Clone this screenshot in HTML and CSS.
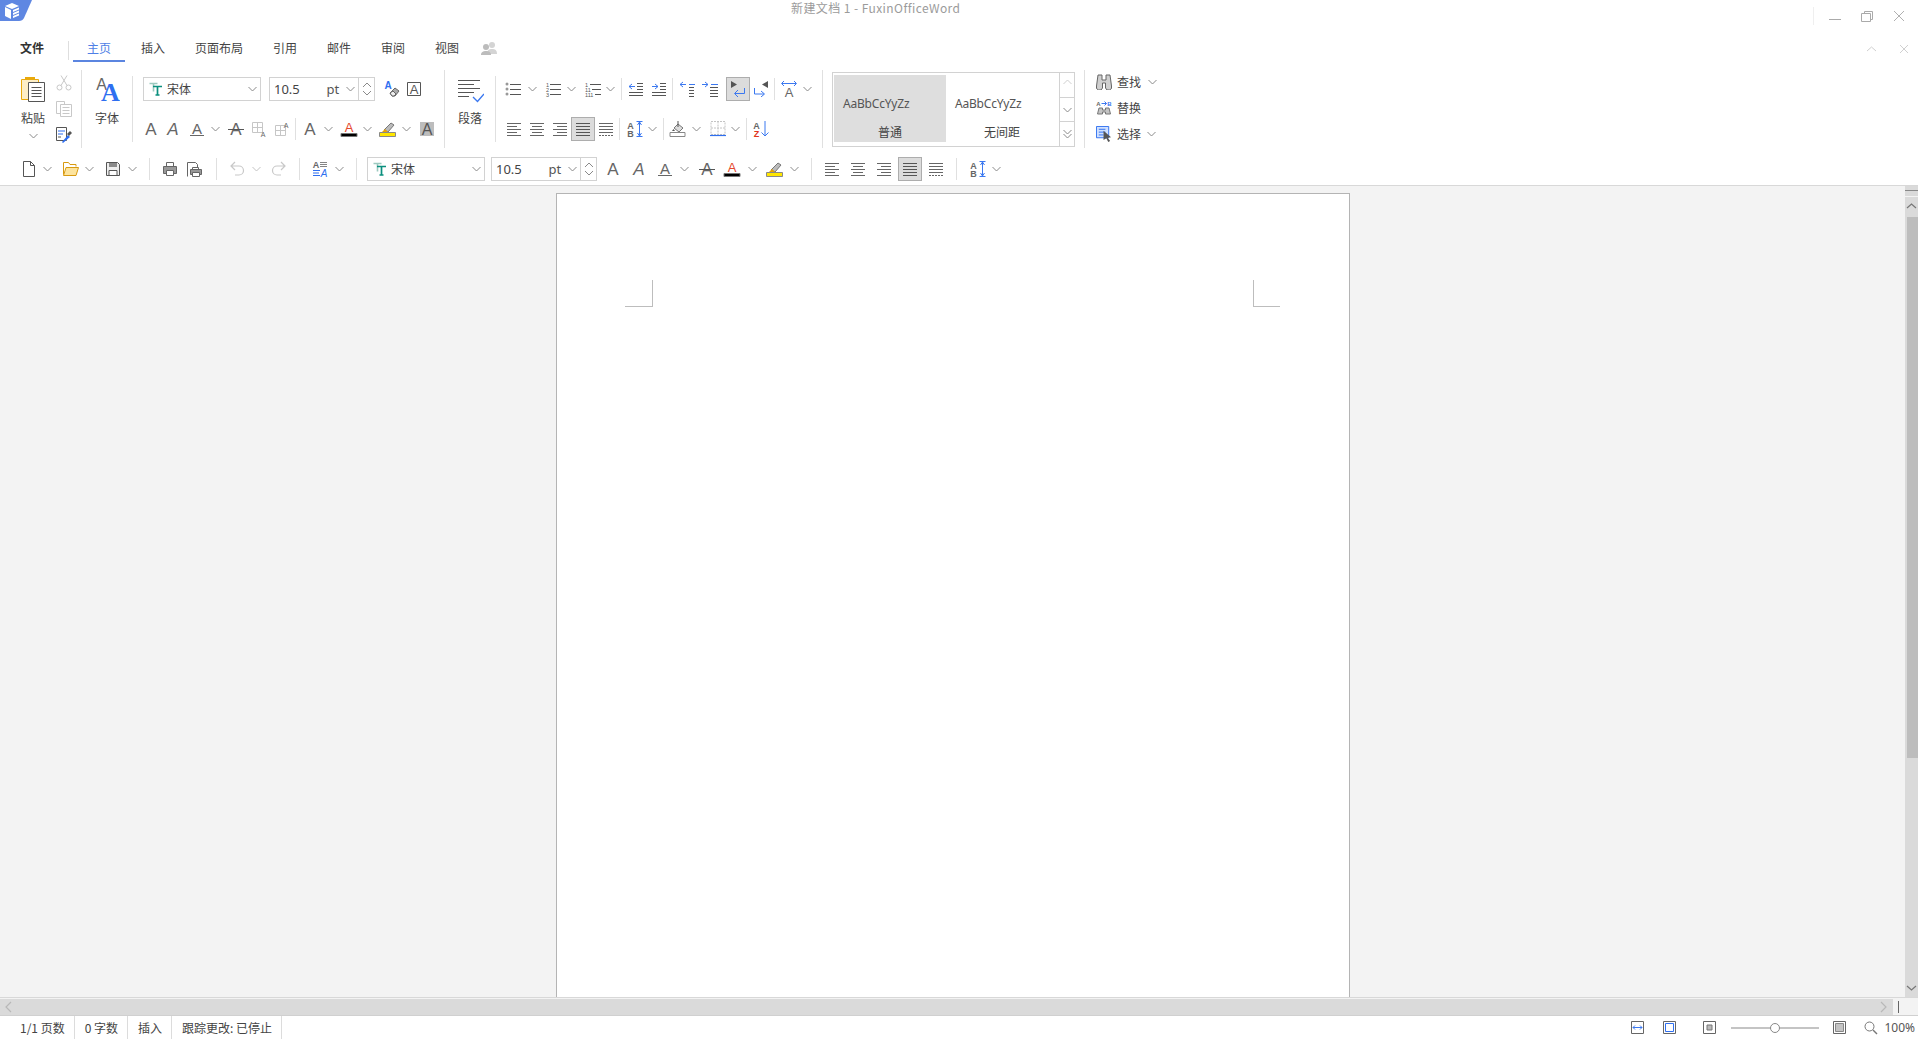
FILE: index.html
```html
<!DOCTYPE html>
<html lang="zh-CN">
<head>
<meta charset="utf-8">
<title>新建文档 1 - FuxinOfficeWord</title>
<link rel="stylesheet" href="styles.css">
</head>
<body>
<svg class="defs" aria-hidden="true">
<defs>
<symbol id="chev" viewBox="0 0 9 16"><path d="M.5 6l4 4 4-4" fill="none" stroke="#8a8a8a"/></symbol>
<symbol id="a" viewBox="0 0 16 16"><text x="8" y="14" class="ga">A</text></symbol>
<symbol id="ai" viewBox="0 0 16 16"><text x="8" y="14" class="ga it">A</text></symbol>
<symbol id="au" viewBox="0 0 16 16"><text x="8" y="13" class="ga sm">A</text><path d="M1 14.5h14" stroke="#666"/></symbol>
<symbol id="as" viewBox="0 0 16 16"><text x="8" y="14" class="ga">A</text><path d="M0 8.5h16" stroke="#555"/></symbol>
<symbol id="ared" viewBox="0 0 18 16"><text x="9" y="11" class="gr">A</text><path d="M1 12.5h16v3H1z" fill="#000" stroke="#777"/></symbol>
<symbol id="hl" viewBox="0 0 18 16"><path d="M5 9l7-7 3 2-6 7z" fill="#bbb" stroke="#777"/><path d="M3 11l3-3 3 3z" fill="#e8a200"/><path d="M.5 11.5h16v4H.5z" fill="#ffe600" stroke="#888"/></symbol>
<symbol id="abox" viewBox="0 0 16 16"><path d="M1 1h14v14H1z" fill="#bdbdbd"/><text x="8" y="13.5" class="ga sm2">A</text></symbol>
<symbol id="aframe" viewBox="0 0 16 16"><path d="M1.5 1.5h13v13h-13z" fill="none" stroke="#555"/><text x="8" y="12.5" class="ga sm3">A</text></symbol>
<symbol id="clear" viewBox="0 0 16 16"><text x="4" y="8" class="gb">A</text><path d="M6 12l5-5 4 3-4 5H8z" fill="#aaa" stroke="#666"/><path d="M8 15l-2-3 3-2 3 3-2 2z" fill="#eee" stroke="#666"/></symbol>
<symbol id="cellb" viewBox="0 0 16 16"><path d="M1.5 1.5h10v10h-10zM6.5 1.5v10M1.5 6.5h10" fill="none" stroke="#c6c6c6"/><text x="12" y="15.5" class="tiny">A</text></symbol>
<symbol id="cellt" viewBox="0 0 16 16"><path d="M1.5 4.5h10v10h-10zM6.5 4.5v10M1.5 9.5h10" fill="none" stroke="#c6c6c6"/><text x="12" y="7" class="tiny">A</text></symbol>
<symbol id="tt" viewBox="0 0 14 14"><path d="M.5 1.5h8M4.500 1.5v8" stroke="#9cc9bf" stroke-width="1.6" fill="none"/><path d="M4 4.500h9M8.500 4.500v9M6.500 13h4" stroke="#0a8f7e" stroke-width="1.7" fill="none"/></symbol>
<symbol id="paste" viewBox="0 0 24 26"><path d="M.5 3.500h17v20H.5z" fill="#fdeec6" stroke="#e9a90c"/><path d="M4 1h10v3H4z" fill="#e9a90c"/><path d="M7.500 6.500h16v19h-16z" fill="#fff" stroke="#555"/><path d="M10.500 11.500h10M10.500 14.500h10M10.500 17.500h10M10.500 20.500h10" stroke="#555"/></symbol>
<symbol id="cut" viewBox="0 0 16 16"><circle cx="3.500" cy="12.500" r="2.500" fill="none" stroke="#c8c8c8"/><circle cx="12.500" cy="12.500" r="2.500" fill="none" stroke="#c8c8c8"/><path d="M5 10.500L11 .5M11 10.500L5 .5" stroke="#c8c8c8"/></symbol>
<symbol id="copy" viewBox="0 0 16 16"><path d="M.5.500h8v12h-8z" fill="#fff" stroke="#c8c8c8"/><path d="M4.500 3.500h11v12h-11z" fill="#fff" stroke="#c8c8c8"/><path d="M6.500 6.500h7M6.500 9.500h7M6.500 12.500h7" stroke="#c8c8c8"/></symbol>
<symbol id="painter" viewBox="0 0 16 16"><path d="M.5.500h10v13H.5z" fill="#fff" stroke="#555"/><path d="M2 4h7M2 7h5" stroke="#2f6ff0" stroke-width="1.200"/><path d="M2 10h3" stroke="#555"/><path d="M6 15l6-7 2 2-7 6z" fill="#2f6ff0"/><path d="M11 7l3-3 2 2-3 3z" fill="#555"/></symbol>
<symbol id="fontbig" viewBox="0 0 24 24"><text x="5.500" y="12" class="fa">A</text><text x="14.500" y="23" class="fb">A</text></symbol>
<symbol id="para" viewBox="0 0 26 24"><path d="M0 .5h22M0 4.500h16M0 8.500h22M0 12.500h16M0 16.500h11" stroke="#555" fill="none"/><path d="M15 17l4.500 4.500L26 14" stroke="#3b78f0" stroke-width="1.400" fill="none"/></symbol>
<symbol id="bul" viewBox="0 0 16 16"><circle cx="2" cy="3" r="1.500" fill="#999"/><circle cx="2" cy="8" r="1.500" fill="#999"/><circle cx="2" cy="13" r="1.500" fill="#999"/><path d="M5 3.500h11M5 8.500h11M5 13.500h11" stroke="#555"/></symbol>
<symbol id="num" viewBox="0 0 16 16"><text x="1" y="6" class="tiny2">1</text><text x="1" y="11" class="tiny2">2</text><text x="1" y="16" class="tiny2">3</text><path d="M5 3.500h11M5 8.500h11M5 13.500h11" stroke="#555"/></symbol>
<symbol id="mul" viewBox="0 0 16 16"><text x="0" y="6" class="tiny2">1</text><text x="0" y="11" class="tiny2">11</text><text x="0" y="16" class="tiny2">111</text><path d="M5 3.500h11M7 8.500h9M10 13.500h6" stroke="#555"/></symbol>
<symbol id="idec" viewBox="0 0 16 16"><path d="M4 3L1 5.500 4 8M1 5.500h6" stroke="#3b78f0" fill="none"/><path d="M9 2.500h6M9 5.500h6M9 8.500h6M1 11.500h14M1 14.500h14" stroke="#555"/></symbol>
<symbol id="iinc" viewBox="0 0 16 16"><path d="M4 3l3 2.500L4 8M1 5.500h6" stroke="#3b78f0" fill="none"/><path d="M9 2.500h6M9 5.500h6M9 8.500h6M1 11.500h14M1 14.500h14" stroke="#555"/></symbol>
<symbol id="ltr" viewBox="0 0 16 16"><path d="M4 1L1 3.500 4 6M1 3.500h6M10 3.500h6" stroke="#3b78f0" fill="none"/><path d="M10 6.500h5M10 9.500h5M10 12.500h5M10 15.500h5" stroke="#555"/></symbol>
<symbol id="rtl" viewBox="0 0 16 16"><path d="M3 1l3 2.500L3 6M0 3.500h6M9 3.500h7" stroke="#3b78f0" fill="none"/><path d="M8 6.500h8M8 9.500h8M8 12.500h8M8 15.500h8" stroke="#555"/></symbol>
<symbol id="pl" viewBox="0 0 16 16"><path d="M1 0l6 3.500L1 7z" fill="#555"/><path d="M14.500 7v5.500H5M8 9l-3.500 3.500L8 16" stroke="#3b78f0" fill="none"/></symbol>
<symbol id="pr" viewBox="0 0 16 16"><path d="M15 0L9 3.500 15 7z" fill="#555"/><path d="M1.500 7v6H11M8 10l3.500 3L8 16" stroke="#3b78f0" fill="none"/></symbol>
<symbol id="dir" viewBox="0 0 16 16"><path d="M3 0L.5 2.500 3 5M13 0l2.500 2.500L13 5M1 2.500h14" stroke="#3b78f0" fill="none"/><text x="8" y="15.500" class="ga sm4">A</text></symbol>
<symbol id="al" viewBox="0 0 16 16"><path d="M1 2.500h14M1 5.500h10M1 8.500h14M1 11.500h10M1 14.500h14" stroke="#666"/></symbol>
<symbol id="ac" viewBox="0 0 16 16"><path d="M1 2.500h14M3 5.500h10M1 8.500h14M3 11.500h10M1 14.500h14" stroke="#666"/></symbol>
<symbol id="ar" viewBox="0 0 16 16"><path d="M1 2.500h14M5 5.500h10M1 8.500h14M5 11.500h10M1 14.500h14" stroke="#666"/></symbol>
<symbol id="aj" viewBox="0 0 16 16"><path d="M1 2.500h14M1 5.500h14M1 8.500h14M1 11.500h14M1 14.500h14" stroke="#555"/></symbol>
<symbol id="ad" viewBox="0 0 16 16"><path d="M1 2.500h14M1 5.500h14M1 8.500h14M1 11.500h14" stroke="#666"/><path d="M1 14.500h14" stroke="#666" stroke-dasharray="2 1"/></symbol>
<symbol id="ls" viewBox="0 0 16 16"><text x="3.500" y="7.500" class="gl">A</text><text x="3.500" y="15.500" class="gl">B</text><path d="M9.500 .5h6M9.500 15.500h6M12.500 1v14M10.500 4l2-3 2 3M10.500 12l2 3 2-3" stroke="#3b78f0" fill="none"/></symbol>
<symbol id="shade" viewBox="0 0 18 16"><path d="M1 11.500h15v4H1z" fill="#fff" stroke="#888"/><path d="M5 7l4-4 5 4-4 4z" fill="#ddd" stroke="#777"/><path d="M9 0v6" stroke="#555"/><path d="M3 10l1.500-2L6 10z" fill="#555"/></symbol>
<symbol id="bord" viewBox="0 0 16 16"><path d="M1 .5h14v13H1zM8 .5v13M1 7h14" fill="none" stroke="#c4c4c4" stroke-dasharray="2 1"/><path d="M0 14.500h16" stroke="#2f6ff0" stroke-width="1.200"/></symbol>
<symbol id="sort" viewBox="0 0 18 16"><text x="4.500" y="7.500" class="gl">A</text><text x="4.500" y="15.500" class="gz">Z</text><path d="M13 0v15M9.500 11.500L13 15l3.500-3.500" stroke="#3b78f0" fill="none"/></symbol>
<symbol id="find" viewBox="0 0 16 16"><path d="M2 1h4v5h4V1h4l1.500 11a2.800 2.800 0 0 1-6 2V9H6.500v5a2.800 2.800 0 0 1-6-2z" fill="#cfcfcf" stroke="#666"/></symbol>
<symbol id="repl" viewBox="0 0 16 16"><text x="2.500" y="6" class="tiny3">A</text><text x="13.500" y="6" class="tiny4">B</text><path d="M5.500 3.500h5M8.500 1.500l2 2-2 2" stroke="#3b78f0" fill="none"/><path d="M3 8h3.500v2h3V8H13l1.500 6h-5v-2h-3v2h-5z" fill="#c4c4c4" stroke="#777"/></symbol>
<symbol id="sel" viewBox="0 0 17 17"><path d="M.5.500h13v12H.5z" fill="#cfe0ff" stroke="#2f6ff0"/><path d="M3 3.500h7M3 6.500h7M3 9.500h5" stroke="#2f6ff0"/><path d="M8 5l8 7-3.500.5L15 16l-2 1-2-4-3 2z" fill="#555"/></symbol>
<symbol id="new" viewBox="0 0 16 16"><path d="M2.500.500h7l4 4v11h-11zM9.500.500v4h4" fill="#fff" stroke="#555"/></symbol>
<symbol id="open" viewBox="0 0 16 16"><path d="M.5 13.500v-12h5l1.500 2h6v2" fill="none" stroke="#d89a10"/><path d="M.5 14.500l2.500-8h12.500l-2.500 8z" fill="#fde49e" stroke="#d89a10"/></symbol>
<symbol id="save" viewBox="0 0 16 16"><path d="M1.500 1.500h11l2 2v11h-13z" fill="#eee" stroke="#555"/><path d="M4 2h8v4H4z" fill="#8a8a8a"/><path d="M4 9.500h8v5H4z" fill="#fff" stroke="#555"/></symbol>
<symbol id="print" viewBox="0 0 16 16"><path d="M4.500 1.500h7v4h-7z" fill="#fff" stroke="#666"/><path d="M1.500 5.500h13v7h-13z" fill="#999" stroke="#666"/><path d="M4.500 9.500h7v5h-7z" fill="#fff" stroke="#666"/></symbol>
<symbol id="prev" viewBox="0 0 16 16"><path d="M1.500 15.500V1.500h8l2 2v3" fill="none" stroke="#666"/><path d="M6.500 6.500h6v2h-6z" fill="#fff" stroke="#666"/><path d="M4.500 8.500h11v5h-11z" fill="#999" stroke="#666"/><path d="M6.500 11.500h7v4h-7z" fill="#fff" stroke="#666"/></symbol>
<symbol id="undo" viewBox="0 0 16 16"><path d="M6 1L2 5l4 4M2 5h8a4.500 4.500 0 0 1 0 9H6" fill="none" stroke="#c8c8c8" stroke-width="1.200"/></symbol>
<symbol id="redo" viewBox="0 0 16 16"><path d="M10 1l4 4-4 4M14 5H6a4.500 4.500 0 0 0 0 9h4" fill="none" stroke="#c8c8c8" stroke-width="1.200"/></symbol>
<symbol id="tc" viewBox="0 0 16 16"><text x="4" y="7" class="gl">A</text><path d="M8 1.500h7M8 3.500h7M8 5.500h7" stroke="#666" stroke-width=".8"/><path d="M1 9.500h7M1 12h6M1 14.500h7" stroke="#2f6ff0"/><text x="12" y="15.500" class="gb2">A</text></symbol>
<symbol id="share" viewBox="0 0 16 16"><circle cx="11" cy="5" r="3" fill="#d4d4d4"/><path d="M6 14c0-4 2-5 5-5s5 1 5 5z" fill="#d4d4d4"/><circle cx="5" cy="7" r="3" fill="#bcbcbc"/><path d="M0 15c0-3 2-4 5-4s5 1 5 4z" fill="#bcbcbc"/></symbol>
<symbol id="logo" viewBox="0 0 32 22"><path d="M0 0h32l-8 18q-1.500 3-5 3H0z" fill="#5f87e2"/><path d="M5 6l7-3 7 3-7 3zM5 7l6 3v9l-6-3zM13 10l6-2.500v2L13 12zM13 13l6-2.500v2L13 15zM13 16l6-2.500v2L13 18z" fill="#fff"/></symbol>
</defs>
</svg>

<div class="app">
  <header class="titlebar">
    <svg class="logo"><use href="#logo"/></svg>
    <div class="doc-title">新建文档 1 - FuxinOfficeWord</div>
    <div class="winctl">
      <span class="winsep"></span>
      <svg class="winbtn"><path d="M1 9.500h12" stroke="#aaa"/></svg>
      <svg class="winbtn restore"><path d="M3.500 3.500v-2h8v8h-2M.5 3.500h9v8h-9z" fill="none" stroke="#aaa"/></svg>
      <svg class="winbtn close"><path d="M1 1l10 10M11 1L1 11" stroke="#b0b0b0"/></svg>
    </div>
  </header>

  <nav class="tabs">
    <span class="file">文件</span>
    <span class="tabsep"></span>
    <span class="tab-active">主页</span>
    <span class="tab first">插入</span>
    <span class="tab">页面布局</span>
    <span class="tab">引用</span>
    <span class="tab">邮件</span>
    <span class="tab">审阅</span>
    <span class="tab">视图</span>
    <svg class="i share"><use href="#share"/></svg>
    <div class="tabctl">
      <svg class="tabbtn"><path d="M1 6l4.500-4L10 6" fill="none" stroke="#d0d0d0"/></svg>
      <svg class="tabbtn x"><path d="M1 1l8 8M9 1L1 9" stroke="#d0d0d0"/></svg>
    </div>
  </nav>

  <section class="ribbon">
    <div class="paste-group">
      <div class="big-col">
        <svg class="paste-icon"><use href="#paste"/></svg>
        <span class="big-label">粘贴</span>
        <svg class="c paste-chev"><use href="#chev"/></svg>
      </div>
      <div class="small-col">
        <svg class="i"><use href="#cut"/></svg>
        <svg class="i"><use href="#copy"/></svg>
        <svg class="i"><use href="#painter"/></svg>
      </div>
    </div>
    <span class="sep-tall"></span>
    <div class="font-big">
      <svg class="fontbig-icon"><use href="#fontbig"/></svg>
      <span class="big-label lab-font">字体</span>
    </div>
    <span class="sep-mid"></span>
    <div class="rows font-rows">
      <div class="row">
        <div class="combo combo-font m10"><svg class="tt"><use href="#tt"/></svg><span class="combo-name">宋体</span><svg class="c"><use href="#chev"/></svg></div>
        <div class="combo combo-size m8"><span class="size-val">10.5</span><span class="size-unit">pt</span><svg class="c"><use href="#chev"/></svg><span class="spin"><svg class="spin-a"><path d="M1 5l4-4 4 4" fill="none" stroke="#8a8a8a"/></svg><svg class="spin-a"><path d="M1 1l4 4 4-4" fill="none" stroke="#8a8a8a"/></svg></span></div>
        <svg class="i m9"><use href="#clear"/></svg>
        <svg class="i m6"><use href="#aframe"/></svg>
      </div>
      <div class="row">
        <svg class="i m10"><use href="#a"/></svg>
        <svg class="i m6"><use href="#ai"/></svg>
        <svg class="i m8"><use href="#au"/></svg>
        <svg class="c m6"><use href="#chev"/></svg>
        <svg class="i m8"><use href="#as"/></svg>
        <svg class="i m7"><use href="#cellb"/></svg>
        <svg class="i m7"><use href="#cellt"/></svg>
        <span class="sep-short m5"></span>
        <svg class="i m6"><use href="#a"/></svg>
        <svg class="c m6"><use href="#chev"/></svg>
        <svg class="i18 m7"><use href="#ared"/></svg>
        <svg class="c m5"><use href="#chev"/></svg>
        <svg class="i18 m7"><use href="#hl"/></svg>
        <svg class="c m5"><use href="#chev"/></svg>
        <svg class="i m8"><use href="#abox"/></svg>
      </div>
    </div>
    <span class="sep-tall"></span>
    <div class="para-big">
      <svg class="para-icon"><use href="#para"/></svg>
      <span class="big-label">段落</span>
    </div>
    <span class="sep-mid"></span>
    <div class="rows para-rows">
      <div class="row">
        <svg class="i m9"><use href="#bul"/></svg>
        <svg class="c m7"><use href="#chev"/></svg>
        <svg class="i m8"><use href="#num"/></svg>
        <svg class="c m6"><use href="#chev"/></svg>
        <svg class="i m9"><use href="#mul"/></svg>
        <svg class="c m5"><use href="#chev"/></svg>
        <span class="sep-short m6"></span>
        <svg class="i m6"><use href="#idec"/></svg>
        <svg class="i m7"><use href="#iinc"/></svg>
        <span class="sep-short m5"></span>
        <svg class="i m6"><use href="#ltr"/></svg>
        <svg class="i m7"><use href="#rtl"/></svg>
        <span class="pressed m8"><svg class="i"><use href="#pl"/></svg></span>
        <svg class="i m3"><use href="#pr"/></svg>
        <span class="sep-short m5"></span>
        <svg class="i m6"><use href="#dir"/></svg>
        <svg class="c m6"><use href="#chev"/></svg>
      </div>
      <div class="row">
        <svg class="i m10"><use href="#al"/></svg>
        <svg class="i m7"><use href="#ac"/></svg>
        <svg class="i m7"><use href="#ar"/></svg>
        <span class="pressed m3"><svg class="i"><use href="#aj"/></svg></span>
        <svg class="i m3"><use href="#ad"/></svg>
        <span class="sep-short m5"></span>
        <svg class="i m7"><use href="#ls"/></svg>
        <svg class="c m5"><use href="#chev"/></svg>
        <span class="sep-short m6"></span>
        <svg class="i18 m5"><use href="#shade"/></svg>
        <svg class="c m5"><use href="#chev"/></svg>
        <svg class="i m9"><use href="#bord"/></svg>
        <svg class="c m5"><use href="#chev"/></svg>
        <span class="sep-short m6"></span>
        <svg class="i18 m5"><use href="#sort"/></svg>
      </div>
    </div>
    <span class="sep-tall"></span>
    <div class="styles">
      <div class="style-cell selected"><span class="sample">AaBbCcYyZz</span><span class="style-name">普通</span></div>
      <div class="style-cell"><span class="sample">AaBbCcYyZz</span><span class="style-name">无间距</span></div>
      <div class="style-scroll">
        <span class="style-btn"><svg class="c"><path d="M.5 7l4-4 4 4" fill="none" stroke="#d0d0d0"/></svg></span>
        <span class="style-btn"><svg class="c"><use href="#chev"/></svg></span>
        <span class="style-btn"><svg class="c"><path d="M.5 4l4 4 4-4M.5 8l4 4 4-4" fill="none" stroke="#8a8a8a"/></svg></span>
      </div>
    </div>
    <span class="sep-tall m9"></span>
    <div class="find-group">
      <div class="find-row"><svg class="i"><use href="#find"/></svg><span class="find-label">查找</span><svg class="c m7"><use href="#chev"/></svg></div>
      <div class="find-row"><svg class="i"><use href="#repl"/></svg><span class="find-label">替换</span></div>
      <div class="find-row"><svg class="i"><use href="#sel"/></svg><span class="find-label">选择</span><svg class="c m6"><use href="#chev"/></svg></div>
    </div>
  </section>

  <section class="qat">
    <svg class="i m21"><use href="#new"/></svg>
    <svg class="c m6"><use href="#chev"/></svg>
    <svg class="i m11"><use href="#open"/></svg>
    <svg class="c m6"><use href="#chev"/></svg>
    <svg class="i m11"><use href="#save"/></svg>
    <svg class="c m7"><use href="#chev"/></svg>
    <span class="sep-short m12"></span>
    <svg class="i m12"><use href="#print"/></svg>
    <svg class="i m8"><use href="#prev"/></svg>
    <span class="sep-short m14"></span>
    <svg class="i m12"><use href="#undo"/></svg>
    <svg class="c m7 dim"><use href="#chev"/></svg>
    <svg class="i m10"><use href="#redo"/></svg>
    <span class="sep-short m12"></span>
    <svg class="i m12"><use href="#tc"/></svg>
    <svg class="c m7"><use href="#chev"/></svg>
    <span class="sep-short m12"></span>
    <div class="combo combo-font m10"><svg class="tt"><use href="#tt"/></svg><span class="combo-name">宋体</span><svg class="c"><use href="#chev"/></svg></div>
    <div class="combo combo-size m6"><span class="size-val">10.5</span><span class="size-unit">pt</span><svg class="c"><use href="#chev"/></svg><span class="spin"><svg class="spin-a"><path d="M1 5l4-4 4 4" fill="none" stroke="#8a8a8a"/></svg><svg class="spin-a"><path d="M1 1l4 4 4-4" fill="none" stroke="#8a8a8a"/></svg></span></div>
    <svg class="i m8"><use href="#a"/></svg>
    <svg class="i m10"><use href="#ai"/></svg>
    <svg class="i m10"><use href="#au"/></svg>
    <svg class="c m7"><use href="#chev"/></svg>
    <svg class="i m10"><use href="#as"/></svg>
    <svg class="i18 m8"><use href="#ared"/></svg>
    <svg class="c m7"><use href="#chev"/></svg>
    <svg class="i18 m9"><use href="#hl"/></svg>
    <svg class="c m6"><use href="#chev"/></svg>
    <span class="sep-short m12"></span>
    <svg class="i m12"><use href="#al"/></svg>
    <svg class="i m10"><use href="#ac"/></svg>
    <svg class="i m10"><use href="#ar"/></svg>
    <span class="pressed m6"><svg class="i"><use href="#aj"/></svg></span>
    <svg class="i m6"><use href="#ad"/></svg>
    <span class="sep-short m12"></span>
    <svg class="i m13"><use href="#ls"/></svg>
    <svg class="c m6"><use href="#chev"/></svg>
  </section>

  <main class="workspace">
    <div class="canvas">
      <div class="page">
        <span class="corner corner-l"></span>
        <span class="corner corner-r"></span>
      </div>
    </div>
    <div class="vscroll">
      <div class="vsplit"><span></span></div>
      <div class="vbtn"><svg class="vbtn-a"><path d="M1 6l4.500-4L10 6" fill="none" stroke="#777" stroke-width="1.200"/></svg></div>
      <div class="vthumb"></div>
      <div class="vtrack"></div>
      <div class="vbtn down"><svg class="vbtn-a"><path d="M1 2l4.500 4L10 2" fill="none" stroke="#777" stroke-width="1.200"/></svg></div>
    </div>
  </main>

  <div class="hscroll">
    <svg class="harrow"><path d="M6 1L1 6l5 5" fill="none" stroke="#b8b8b8" stroke-width="1.200"/></svg>
    <svg class="harrow right"><path d="M1 1l5 5-5 5" fill="none" stroke="#b8b8b8" stroke-width="1.200"/></svg>
    <div class="hsplit"><span></span></div>
  </div>

  <footer class="status">
    <span class="st-item">1/1 页数</span>
    <span class="st-item">0 字数</span>
    <span class="st-item">插入</span>
    <span class="st-item">跟踪更改: 已停止</span>
    <div class="st-right">
      <svg class="st-ic"><path d="M.5.500h12v12H.5z" fill="none" stroke="#666"/><path d="M2 6.500h9M4 4.500l-2 2 2 2M9 4.500l2 2-2 2" fill="none" stroke="#3b78f0"/></svg>
      <svg class="st-ic m19"><path d="M.5.500h12v12H.5z" fill="none" stroke="#666"/><path d="M2.500 2.500h8v8h-8z" fill="none" stroke="#2f6ff0"/></svg>
      <svg class="st-ic m27"><path d="M.5.500h12v12H.5z" fill="none" stroke="#666"/><path d="M4 4h5v5H4z" fill="#bbb" stroke="#777"/></svg>
      <div class="slider"><span class="knob"></span></div>
      <svg class="st-ic m14"><path d="M.5.500h12v12H.5z" fill="none" stroke="#666"/><path d="M2.500 2.500h8v8h-8z" fill="#c4c4c4" stroke="#888"/></svg>
      <svg class="st-ic m18"><circle cx="5.500" cy="5.500" r="4.500" fill="none" stroke="#777"/><path d="M9 9l4 4" stroke="#777" stroke-width="1.400"/></svg>
      <span class="zoom-val">100%</span>
    </div>
  </footer>
</div>
</body>
</html>
```
FILE: styles.css
```css
* { box-sizing: border-box; }
html, body { margin: 0; height: 100%; overflow: hidden; background: #fff; }
body { font: 12px/16px "Noto Sans CJK SC", "Noto Sans", sans-serif; color: #444; }
svg { display: block; flex: none; overflow: visible; }
.defs { width: 0; height: 0; position: absolute; }
.ga { font: 17px "Liberation Sans", sans-serif; fill: #666; text-anchor: middle; }
.ga.it { font-style: italic; }
.ga.sm { font-size: 15px; }
.ga.sm2 { font-size: 16px; fill: #555; }
.ga.sm3 { font-size: 13px; fill: #555; }
.ga.sm4 { font-size: 13px; }
.gr { font: 13px "Liberation Sans", sans-serif; fill: #e5482c; text-anchor: middle; }
.gb { font: bold 10px "Liberation Sans", sans-serif; fill: #2f6ff0; text-anchor: middle; }
.gb2 { font: italic 10px "Liberation Sans", sans-serif; fill: #2f6ff0; text-anchor: middle; }
.gl { font: bold 9px "Liberation Sans", sans-serif; fill: #666; text-anchor: middle; }
.gz { font: bold 9px "Liberation Sans", sans-serif; fill: #e0351b; text-anchor: middle; }
.tiny { font: 7px "Liberation Sans", sans-serif; fill: #666; text-anchor: middle; }
.tiny2 { font: 5.500px "Liberation Sans", sans-serif; fill: #555; }
.tiny3 { font: bold 6px "Liberation Sans", sans-serif; fill: #666; text-anchor: middle; }
.tiny4 { font: bold 6px "Liberation Sans", sans-serif; fill: #3b78f0; text-anchor: middle; }
.fa { font: 16px "Liberation Sans", sans-serif; fill: #666; text-anchor: middle; }
.fb { font: bold 26px "Liberation Serif", serif; fill: #2f6ff0; text-anchor: middle; }

.m3 { margin-left: 3px; } .m5 { margin-left: 5px; } .m6 { margin-left: 6px; }
.m7 { margin-left: 7px; } .m8 { margin-left: 8px; } .m9 { margin-left: 9px; }
.m10 { margin-left: 10px; } .m11 { margin-left: 11px; } .m12 { margin-left: 12px; }
.m13 { margin-left: 13px; } .m14 { margin-left: 14px; } .m18 { margin-left: 18px; }
.m19 { margin-left: 19px; } .m21 { margin-left: 21px; } .m27 { margin-left: 27px; }

.i { width: 16px; height: 16px; }
.i18 { width: 18px; height: 16px; }
.c { width: 9px; height: 16px; }
.dim { opacity: .5; }

.app { display: flex; flex-direction: column; height: 1039px; width: 1918px; }

.titlebar { display: flex; height: 32px; flex: none; }
.logo { width: 32px; height: 22px; }
.doc-title { margin-left: 759px; color: #9b9b9b; line-height: 16px; letter-spacing: .42px; }
.winctl { margin-left: auto; display: flex; padding-top: 7px; height: 32px; }
.winsep { width: 1px; height: 18px; background: #efefef; }
.winbtn { width: 14px; height: 12px; margin: 3px 0 0 14px; }
.winbtn.restore { margin-left: 19px; }
.winbtn.close { margin-left: 18px; margin-right: 13px; width: 12px; }

.tabs { display: flex; height: 30px; flex: none; align-items: flex-start; padding: 8px 0 0 20px; }
.file { font-weight: 700; color: #333; }
.tabsep { width: 1px; height: 19px; margin: 1px 0 0 24px; background: #dedede; }
.tab-active { width: 52px; height: 22px; margin-left: 4px; text-align: center; color: #4f7fe6; border-bottom: 2px solid #5b85e0; }
.tab { margin-left: 30px; }
.tab.first { margin-left: 16px; }
.share { margin-left: 22px; }
.tabctl { margin-left: auto; display: flex; padding-top: 4px; }
.tabbtn { width: 11px; height: 8px; margin-top: 1px; }
.tabbtn.x { width: 10px; height: 10px; margin: 0 9px 0 22px; }

.ribbon { display: flex; flex: none; height: 78px; margin-top: 8px; }
.sep-tall { width: 1px; height: 78px; background: #e0e0e0; flex: none; }
.sep-mid { width: 1px; height: 66px; margin-top: 6px; background: #e0e0e0; flex: none; }
.sep-short { width: 1px; height: 22px; background: #e0e0e0; flex: none; }

.paste-group { width: 81px; display: flex; padding: 6px 0 0 21px; }
.big-col { width: 24px; display: flex; flex-direction: column; align-items: center; }
.paste-icon { width: 24px; height: 26px; }
.big-label { display: block; margin-top: 8px; line-height: 16px; white-space: nowrap; }
.paste-chev { margin-top: 2px; }
.small-col { margin: -1px 0 0 11px; display: flex; flex-direction: column; gap: 10px; }

.font-big { width: 50px; padding: 8px 0 0 14px; }
.fontbig-icon { width: 24px; height: 24px; }
.lab-font { margin-top: 8px; margin-left: -1px; }

.rows { display: flex; flex-direction: column; gap: 16px; padding-top: 7px; flex: none; }
.row { display: flex; align-items: center; height: 24px; }
.font-rows { width: 311px; }
.para-rows { width: 326px; }
.para-big { width: 50px; padding: 10px 0 0 13px; }
.para-icon { width: 26px; height: 24px; }
.para-big .big-label { margin-top: 6px; }

.combo { display: flex; align-items: center; height: 24px; border: 1px solid #d2d2d2; background: #fff; flex: none; }
.combo-font { width: 118px; padding: 0 3px 0 5px; }
.combo-size { width: 106px; padding-left: 4px; }
.tt { width: 14px; height: 14px; }
.combo-name { margin: 0 auto 0 4px; }
.size-val { width: 53px; color: #444; font: 13px "Noto Sans", sans-serif; }
.size-unit { width: 20px; font: 13px "Noto Sans", sans-serif; color: #555; }
.spin { margin-left: 3px; width: 16px; height: 22px; border-left: 1px solid #d2d2d2; display: flex; flex-direction: column; justify-content: space-around; align-items: center; padding: 3px 0; }
.spin-a { width: 10px; height: 6px; }

.pressed { width: 24px; height: 24px; display: flex; align-items: center; justify-content: center; background: #dcdcdc; border: 1px solid #adadad; flex: none; }

.styles { width: 243px; height: 75px; margin: 2px 0 0 9px; border: 1px solid #d2d2d2; padding: 0 0 0 1px; display: flex; flex: none; }
.style-cell { width: 112px; height: 67px; margin-top: 2px; display: flex; flex-direction: column; padding-left: 9px; }
.style-cell.selected { background: #dedede; }
.sample { margin-top: 21px; font: 12px/16px "Noto Sans", sans-serif; letter-spacing: -.2px; color: #555; white-space: nowrap; }
.style-name { margin: 12px 0 0 -9px; text-align: center; }
.style-scroll { margin-left: 1px; border-left: 1px solid #d2d2d2; flex: 1; display: flex; flex-direction: column; }
.style-btn { flex: 1; display: flex; align-items: center; justify-content: center; border-bottom: 1px solid #d2d2d2; }
.style-btn:last-child { border-bottom: 0; }

.find-group { margin-top: -1px; padding-left: 11px; }
.find-row { display: flex; align-items: center; height: 26px; }
.find-label { margin-left: 5px; }

.qat { display: flex; align-items: center; flex: none; height: 38px; padding: 9px 0 5px; border-bottom: 1px solid #d8d8d8; }

.workspace { flex: 1; min-height: 0; display: flex; background: #f3f3f3; border-bottom: 1px solid #d8d8d8; }
.canvas { flex: 1; min-width: 0; overflow: hidden; padding: 7px 0 0 556px; }
.page { width: 794px; height: 1123px; background: #fff; border: 1px solid #b4b4b4; padding: 86px 69px 0 68px; display: flex; justify-content: space-between; }
.corner { width: 27px; height: 27px; border-bottom: 1px solid #bdbdbd; }
.corner-l { width: 28px; border-right: 1px solid #bdbdbd; }
.corner-r { border-left: 1px solid #bdbdbd; }

.vscroll { width: 13px; flex: none; display: flex; flex-direction: column; background: #dadada; }
.vsplit { height: 11px; border-bottom: 1px solid #f3f3f3; padding-top: 4px; }
.vsplit span { display: block; height: 1px; background: #888; }
.vbtn { height: 20px; padding: 5px 0 0 1px; flex: none; }
.vbtn.down { height: 18px; background: #dadada; }
.vbtn-a { width: 11px; height: 8px; }
.vthumb { height: 541px; margin-left: 2px; background: #bdbdbd; flex: none; }
.vtrack { flex: 1; }

.hscroll { height: 18px; flex: none; background: #dadada; border-top: 1px solid #f3f3f3; border-bottom: 1px solid #d0d0d0; display: flex; align-items: center; padding-left: 5px; }
.harrow { width: 7px; height: 12px; }
.harrow.right { margin-left: auto; }
.hsplit { width: 25px; height: 16px; margin-left: 6px; background: #f3f3f3; padding-left: 5px; }
.hsplit span { display: block; width: 1px; height: 12px; margin-top: 2px; background: #666; }

.status { flex: none; height: 23px; display: flex; align-items: center; padding-left: 10px; }
.st-item { padding: 0 9px 0 10px; border-right: 1px solid #dcdcdc; height: 100%; display: flex; align-items: center; white-space: nowrap; }
.st-right { margin-left: auto; display: flex; align-items: center; padding-right: 3px; }
.st-ic { width: 13px; height: 13px; }
.slider { width: 88px; height: 2px; margin-left: 15px; background: #c4c4c4; display: flex; justify-content: center; align-items: center; }
.knob { width: 10px; height: 10px; border-radius: 50%; background: #fff; border: 1px solid #888; flex: none; }
.zoom-val { margin-left: 7px; font: 12px "Noto Sans", sans-serif; color: #555; }
```
